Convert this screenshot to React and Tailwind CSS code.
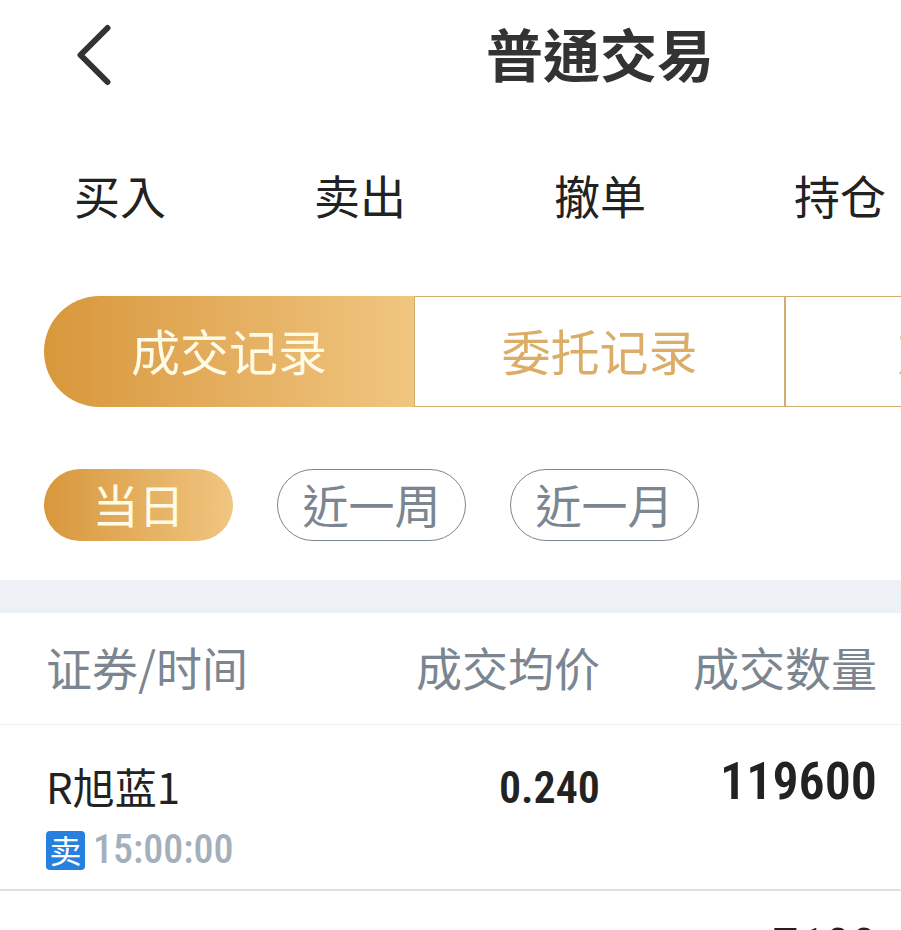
const NAV = ["买入", "卖出", "撤单", "持仓"];
const RECORDS = ["成交记录", "委托记录", "对账单"];
const RANGES = ["当日", "近一周", "近一月"];

function Header() {
  return (
    <header className="grid h-28 grid-cols-[240px_720px]">
      <button type="button" aria-label="返回" className="flex items-start pt-6 pl-[75px]">
        <svg width="37" height="62" viewBox="0 0 37 62" fill="none" stroke="#333333" strokeWidth="6" strokeLinecap="round" strokeLinejoin="round">
          <path d="M32.5 4 L5.500 31 L32.5 58" />
        </svg>
      </button>
      <h1 className="text-center text-[57px] leading-[104px] font-bold text-[#333333]">普通交易</h1>
    </header>
  );
}

function MainNav() {
  return (
    <nav className="flex h-[184px]">
      {NAV.map((label) => (
        <a key={label} href="#" className="w-60 shrink-0 text-center text-[46px] leading-[164px] text-[#222222]">
          {label}
        </a>
      ))}
    </nav>
  );
}

function RecordTabs() {
  return (
    <div className="flex h-[111px] pl-11">
      {RECORDS.map((label, i) => (
        <button
          key={label}
          type="button"
          className={
            i === 0
              ? "w-[370px] shrink-0 rounded-l-full bg-linear-to-r from-[#d8973a] to-[#f0c680] pb-1 text-[49px] text-[#fffbe6]"
              : "w-[371px] shrink-0 border border-[#d0ae72] pb-1 text-[49px] text-[#dbad66]"
          }
        >
          {label}
        </button>
      ))}
    </div>
  );
}

function RangeFilter() {
  return (
    <div className="flex gap-11 pt-[62px] pb-[39px] pl-11">
      {RANGES.map((label, i) => (
        <button
          key={label}
          type="button"
          className={
            i === 0
              ? "h-[72px] w-[189px] rounded-full bg-linear-to-r from-[#d8973a] to-[#f0c680] pb-1 text-[46px] leading-[66px] text-[#fffbe6]"
              : "h-[72px] w-[189px] rounded-full border border-[#7b8691] pb-1 text-[46px] leading-[66px] text-[#7b8691]"
          }
        >
          {label}
        </button>
      ))}
    </div>
  );
}

function Trades() {
  return (
    <table className="w-full table-fixed border-t-[33px] border-[#edf1f5]">
      <thead>
        <tr className="border-b border-[#eceeef] align-top text-[46px] leading-[107px] text-[#7b8691]">
          <th scope="col" className="w-[36%] pb-1 pl-[46px] text-left font-normal">证券/时间</th>
          <th scope="col" className="pb-1 text-right font-normal">成交均价</th>
          <th scope="col" className="w-[301px] pr-6 pb-1 text-right font-normal">成交数量</th>
        </tr>
      </thead>
      <tbody className="text-[#222222]">
        <tr className="h-[165px] border-b-2 border-[#e0e0e0] align-top">
          <td className="pt-9 pl-[46px]">
            <div className="text-[42px] leading-[50px]">R旭蓝1</div>
            <div className="flex items-center gap-2 pt-4">
              <span className="flex size-[39px] items-center justify-center rounded-sm bg-[#2680de] pb-0.5 text-[32px] text-white">卖</span>
              <time className="font-['Roboto_Condensed','Roboto',sans-serif] text-[40px] leading-[46px] font-medium text-[#a3afba]">15:00:00</time>
            </div>
          </td>
          <td className="pt-8 text-right font-['Roboto_Condensed','Roboto',sans-serif] text-[44px] leading-[62px] font-semibold">0.240</td>
          <td className="pt-6 pr-6 text-right font-['Roboto_Condensed','Roboto',sans-serif] text-[52px] leading-[66px] font-semibold">119600</td>
        </tr>
        <tr className="h-[165px] align-top">
          <td />
          <td />
          <td className="pt-6 pr-6 text-right font-['Roboto_Condensed','Roboto',sans-serif] text-[52px] leading-[66px] font-semibold">7100</td>
        </tr>
      </tbody>
    </table>
  );
}

export default function App() {
  return (
    <main className="h-screen overflow-hidden bg-white font-['Noto_Sans_CJK_TC','Noto_Sans_CJK_SC',sans-serif]">
      <Header />
      <MainNav />
      <RecordTabs />
      <RangeFilter />
      <Trades />
    </main>
  );
}
